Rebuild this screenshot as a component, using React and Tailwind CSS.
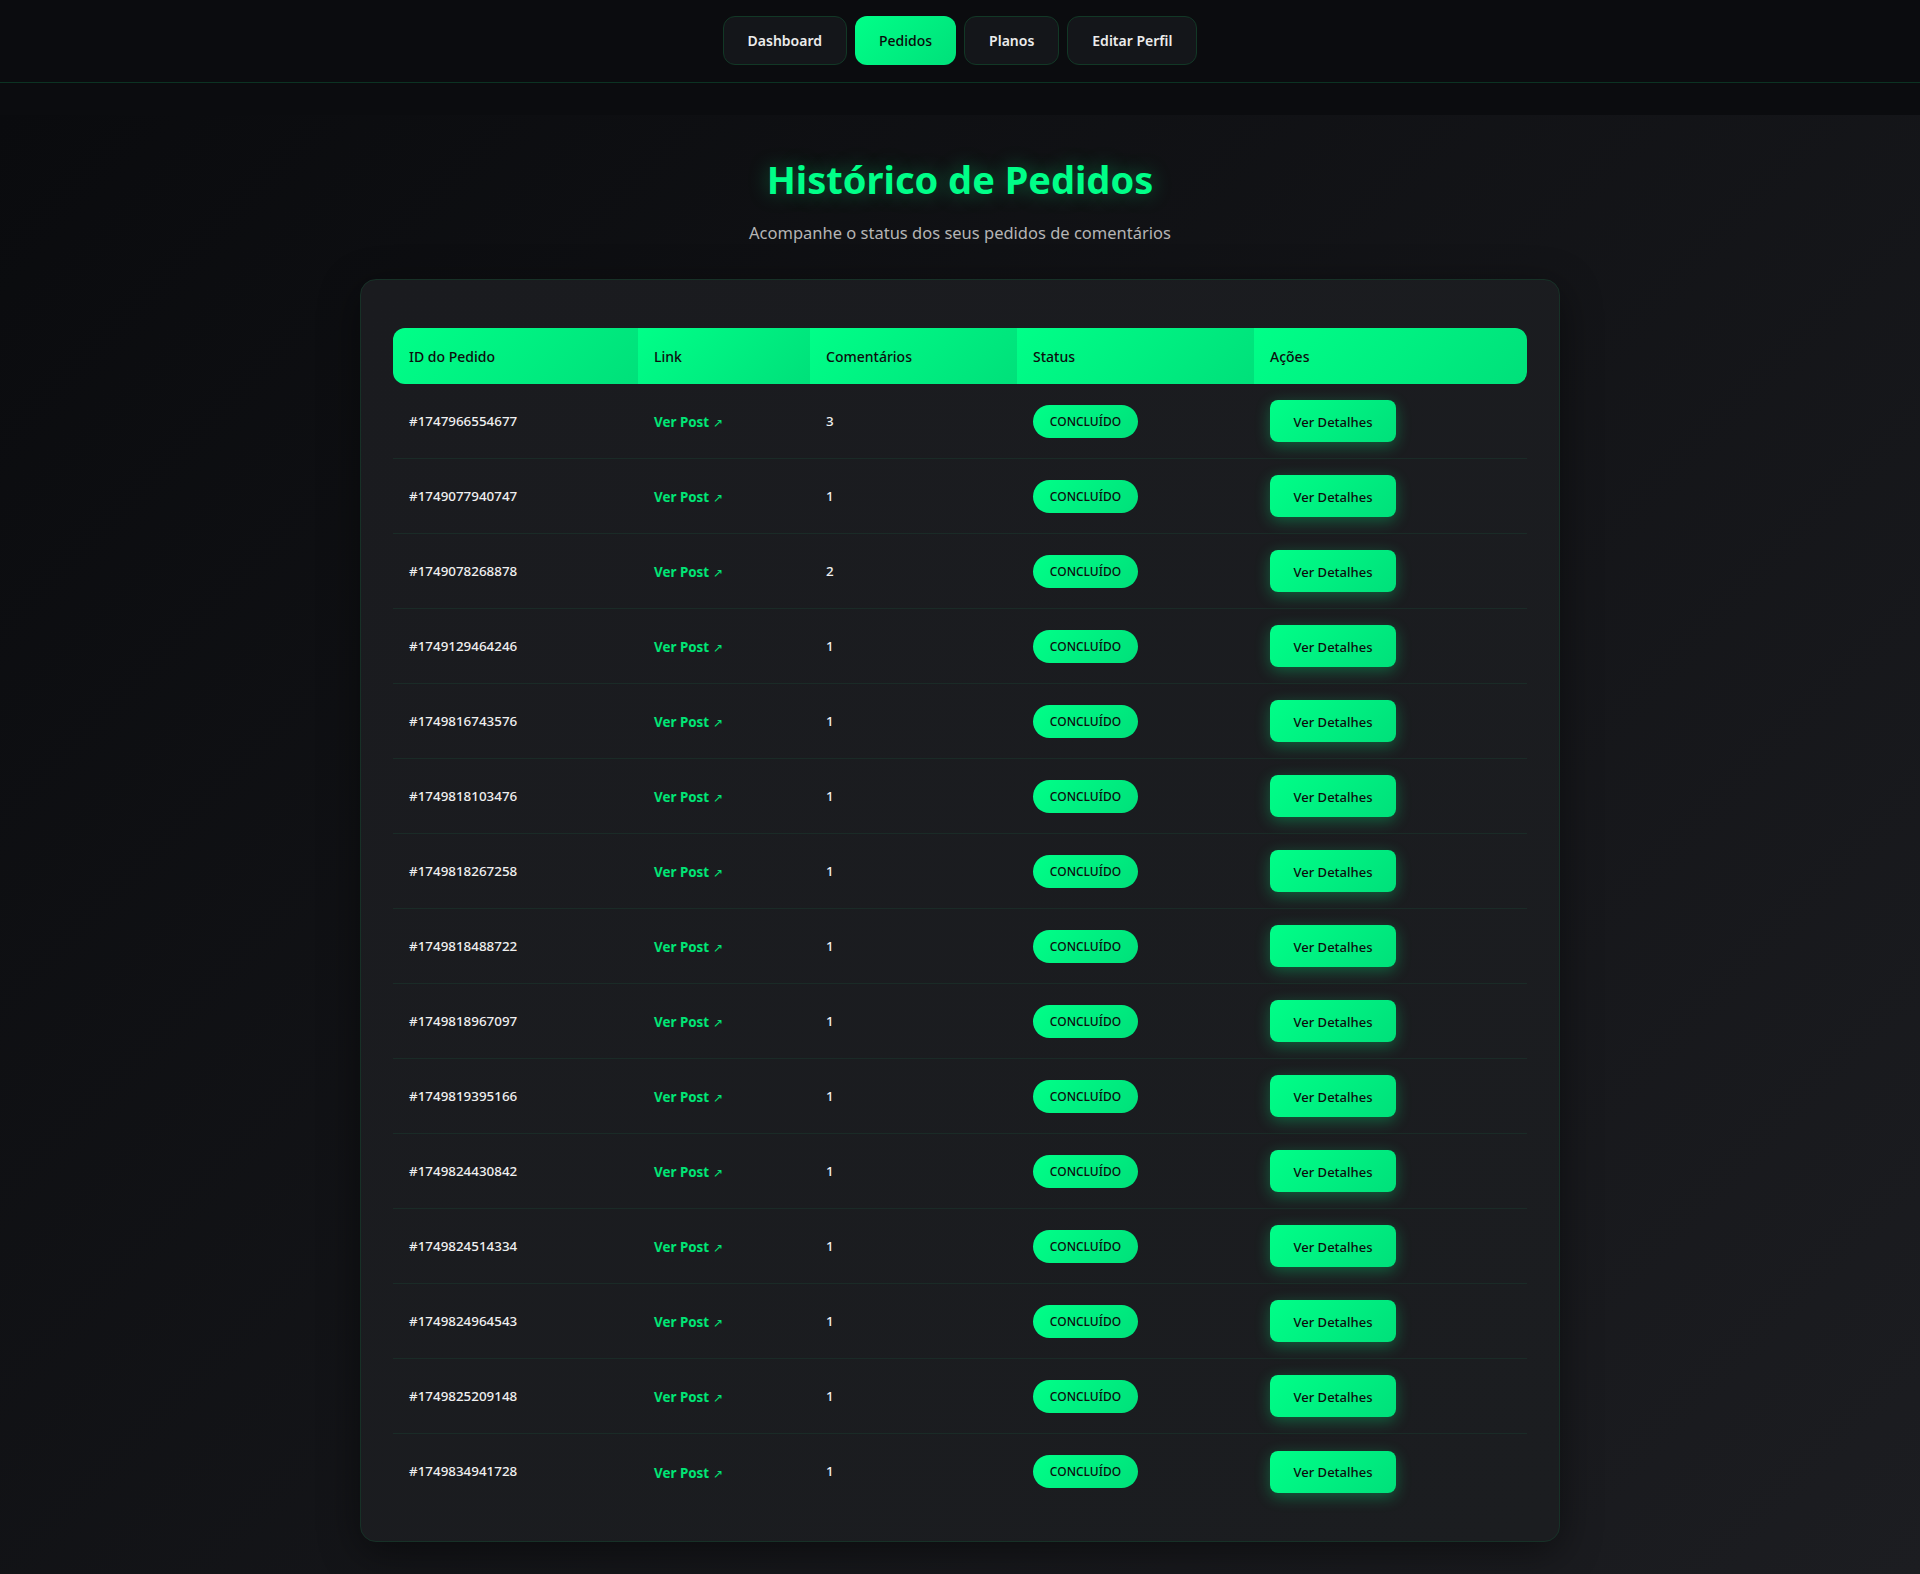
import React from "react";

const orders = [
  ["#1747966554677", 3],
  ["#1749077940747", 1],
  ["#1749078268878", 2],
  ["#1749129464246", 1],
  ["#1749816743576", 1],
  ["#1749818103476", 1],
  ["#1749818267258", 1],
  ["#1749818488722", 1],
  ["#1749818967097", 1],
  ["#1749819395166", 1],
  ["#1749824430842", 1],
  ["#1749824514334", 1],
  ["#1749824964543", 1],
  ["#1749825209148", 1],
  ["#1749834941728", 1],
];

const font = { fontFamily: '"Noto Sans", "Open Sans", sans-serif' };

function NavButton({ children, active }) {
  return (
    <button
      className={
        active
          ? "h-[49px] px-[24px] rounded-[12px] bg-[linear-gradient(135deg,#00ff88,#00e07a)] text-[#0a0a0a] text-[14px] font-medium"
          : "h-[49px] px-[24px] rounded-[12px] bg-[#14161a] border border-[#123826] text-[#ececec] text-[14px] font-semibold"
      }
    >
      {children}
    </button>
  );
}

export default function App() {
  return (
    <div className="min-h-screen flex flex-col bg-[#0b0c0f] text-white" style={font}>
      <nav className="h-[83px] shrink-0 border-b border-[#0c3323] bg-[#0b0c0f] flex items-start justify-center gap-[8px] pt-[16px]">
        <NavButton>Dashboard</NavButton>
        <NavButton active>Pedidos</NavButton>
        <NavButton>Planos</NavButton>
        <NavButton>Editar Perfil</NavButton>
      </nav>
      <div className="h-[32px] shrink-0 bg-[#0b0c0f]" />
      <main className="flex-1 bg-[linear-gradient(135deg,#0a0b0e_0%,#1c1d21_100%)] pt-[40px] pb-[33px] px-4">
        <h1 className="text-center text-[38px] leading-[48px] font-bold text-[#00ff88] [text-shadow:0_0_20px_rgba(0,255,136,0.35)]">
          Histórico de Pedidos
        </h1>
        <p className="text-center text-[16.5px] leading-[26px] text-[#b5b5b5] mt-[17px]">
          Acompanhe o status dos seus pedidos de comentários
        </p>
        <div className="mx-auto mt-[33px] w-[1200px] rounded-[16px] border border-[#173127] bg-[linear-gradient(135deg,#1a1b1f,#1b1d20)] shadow-[0_10px_40px_rgba(0,0,0,0.45)] px-[32px] pt-[48px] pb-[32px]">
          <table className="w-full border-separate border-spacing-0 text-left">
            <thead>
              <tr className="h-[56px] text-[14px] text-[#0d0d0d]">
                <th className="w-[245px] pl-[16px] font-medium rounded-l-[12px] bg-[linear-gradient(135deg,#00ff88,#00e07a)]">ID do Pedido</th>
                <th className="w-[172px] pl-[16px] font-medium bg-[linear-gradient(135deg,#00ff88,#00e07a)]">Link</th>
                <th className="w-[207px] pl-[16px] font-medium bg-[linear-gradient(135deg,#00ff88,#00e07a)]">Comentários</th>
                <th className="w-[237px] pl-[16px] font-medium bg-[linear-gradient(135deg,#00ff88,#00e07a)]">Status</th>
                <th className="pl-[16px] font-medium rounded-r-[12px] bg-[linear-gradient(135deg,#00ff88,#00e07a)]">Ações</th>
              </tr>
            </thead>
            <tbody>
              {orders.map(([id, n], i) => {
                const border = i < orders.length - 1 ? "border-b border-[#1a2b27]" : "";
                return (
                  <tr key={id} className="h-[75px]">
                    <td className={`pl-[16px] text-[13.4px] font-medium text-[#f0f0f0] ${border}`}>{id}</td>
                    <td className={`pl-[16px] ${border}`}>
                      <a className="text-[13.4px] font-bold text-[#00e676]">
                        Ver Post <span className="text-[12px] font-normal">↗</span>
                      </a>
                    </td>
                    <td className={`pl-[16px] text-[13.4px] font-medium text-[#f0f0f0] ${border}`}>{n}</td>
                    <td className={`pl-[16px] ${border}`}>
                      <span className="inline-flex items-center justify-center h-[33px] w-[105px] rounded-full bg-[linear-gradient(135deg,#00ff88,#00e07a)] text-[12px] leading-none pt-[1px] font-medium text-[#0d0d0d] uppercase">
                        Concluído
                      </span>
                    </td>
                    <td className={`pl-[16px] ${border}`}>
                      <button className="inline-flex items-center justify-center h-[42px] w-[126px] pt-[2px] rounded-[8px] bg-[linear-gradient(135deg,#00ff88,#00e07a)] text-[13px] leading-none font-medium text-[#0d0d0d] shadow-[0_4px_15px_rgba(0,255,136,0.3)]">
                        Ver Detalhes
                      </button>
                    </td>
                  </tr>
                );
              })}
            </tbody>
          </table>
        </div>
      </main>
    </div>
  );
}
